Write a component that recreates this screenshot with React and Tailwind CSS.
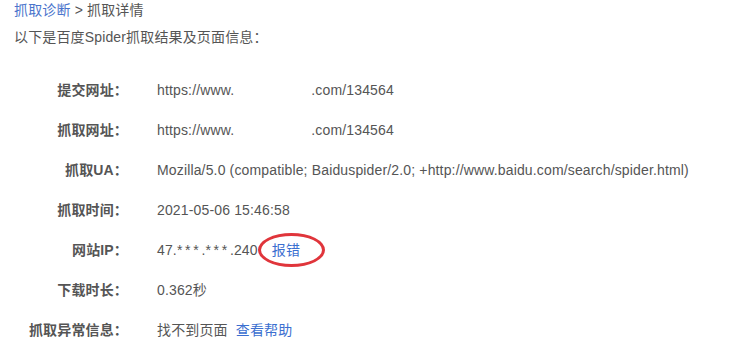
const rows = [
  { label: "提交网址：", value: "url" },
  { label: "抓取网址：", value: "url" },
  { label: "抓取UA：", value: "Mozilla/5.0 (compatible; Baiduspider/2.0; +http://www.baidu.com/search/spider.html)" },
  { label: "抓取时间：", value: "2021-05-06 15:46:58" },
  { label: "网站IP：", value: "ip" },
  { label: "下载时长：", value: "0.362秒" },
  { label: "抓取异常信息：", value: "error" },
];

function Value({ value }) {
  if (value === "url") {
    return (
      <span>
        https://www.<span className="inline-block w-[77px]" />.com/134564
      </span>
    );
  }
  if (value === "ip") {
    return (
      <span>
        47.<span className="tracking-[2.7px]">***</span>.<span className="tracking-[2.7px]">***</span>.240
        <span className="relative ml-[14px] text-[#3b6fd0]">
          报错
          <span className="absolute left-[-14px] top-1/2 -translate-y-1/2 w-[67px] h-[34px] rounded-[50%] border-[3px] border-[#e0353b]" />
        </span>
      </span>
    );
  }
  if (value === "error") {
    return (
      <span>
        找不到页面<a className="ml-[8px] text-[#3b6fd0]">查看帮助</a>
      </span>
    );
  }
  return <span>{value}</span>;
}

export default function App() {
  return (
    <div className="w-[756px] h-[360px] bg-white pl-[14px] text-[14px] tracking-[0.15px] text-[#555] font-['Liberation_Sans','Noto_Sans_CJK_SC',sans-serif] overflow-hidden">
      <div className="leading-[20px]">
        <a className="text-[#4a74cc]">抓取诊断</a> &gt; 抓取详情
      </div>
      <div className="mt-[7px] leading-[20px]">以下是百度Spider抓取结果及页面信息：</div>
      <div className="mt-[23px]">
        {rows.map((r) => (
          <div key={r.label} className="flex items-center h-[40px]">
            <div className="w-[114px] text-right font-bold text-[#555]">{r.label}</div>
            <div className="ml-[29px]">
              <Value value={r.value} />
            </div>
          </div>
        ))}
      </div>
    </div>
  );
}
